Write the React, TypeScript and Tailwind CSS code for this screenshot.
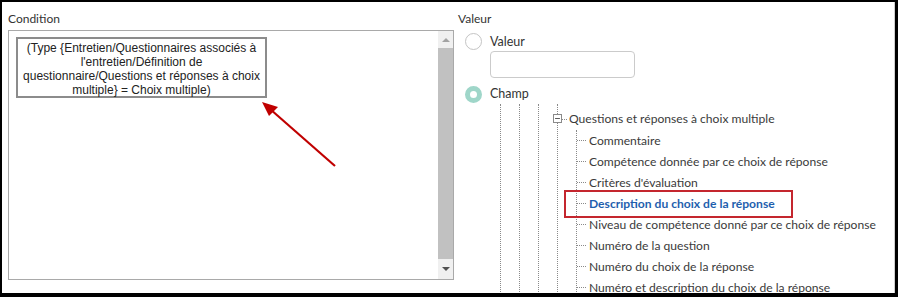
import { Minus } from 'lucide-react';

const children = [
  'Commentaire',
  'Compétence donnée par ce choix de réponse',
  "Critères d'évaluation",
  'Description du choix de la réponse',
  'Niveau de compétence donné par ce choix de réponse',
  'Numéro de la question',
  'Numéro du choix de la réponse',
  'Numéro et description du choix de la réponse',
];

export default function App() {
  return (
    <div className="relative w-[898px] h-[297px] bg-black pl-[2px] pt-[2px] pr-[3px] pb-[4px]">
      <div className="h-full bg-white border-r border-[#cfcfcf] flex overflow-hidden text-[#333] font-['Lato','Open_Sans',sans-serif]">
        {/* Condition */}
        <div className="w-[452px] shrink-0 pl-[6px] pt-[9px] flex flex-col">
          <div className="text-[12px] leading-[16px] h-[19px]">Condition</div>
          <div className="flex h-[250px] border border-[#a9a9a9]">
            <div className="flex-1 pl-[7px] pt-[6px]">
              <div className="w-[251px] h-[61px] border-2 border-[#8c8c8c] pt-[2px] text-center text-[12px] leading-[14px] text-[#222] font-['Liberation_Sans',Arial,sans-serif]">
                (Type {'{'}Entretien/Questionnaires associés à l'entretien/Définition de questionnaire/Questions et réponses à choix multiple{'}'} = Choix multiple)
              </div>
            </div>
            <div className="w-[15px] flex flex-col bg-[#f0f0f0]">
              <div className="h-[17px] flex items-center justify-center">
                <div className="w-0 h-0 border-l-[4px] border-r-[4px] border-b-[4px] border-l-transparent border-r-transparent border-b-[#a3a3a3]" />
              </div>
              <div className="flex-1 bg-[#c1c1c1]" />
              <div className="h-[20px] flex items-center justify-center">
                <div className="w-0 h-0 border-l-[4px] border-r-[4px] border-t-[4px] border-l-transparent border-r-transparent border-t-[#505050]" />
              </div>
            </div>
          </div>
        </div>

        {/* Valeur */}
        <div className="flex-1 ml-[4px] pt-[9px] flex flex-col">
          <div className="text-[12px] leading-[16px] h-[19px]">Valeur</div>
          <div className="flex">
            <div className="w-[32px] shrink-0 pl-[7px]">
              <div className="mt-[6px] w-[17px] h-[17px] rounded-full border border-[#c4c4c4] bg-white" />
              <div className="mt-[36px] w-[17px] h-[17px] rounded-full border-[5px] border-[#9fd6c9] bg-white" />
            </div>
            <div className="flex-1">
              <div className="mt-[7px] text-[12.5px] leading-[16px]">Valeur</div>
              <div className="mt-[1px] w-[145px] h-[27px] rounded-[4px] border border-[#cbcbcb]" />
              <div className="mt-[8px] text-[12.5px] leading-[16px]">Champ</div>

              <div className="flex ml-[10px] mt-[2px] text-[12.1px] leading-[16px] text-[#3a3a3a]">
                <div className="w-[19px] h-[200px] border-l border-dotted border-[#8a8a8a]" />
                <div className="w-[19px] border-l border-dotted border-[#8a8a8a]" />
                <div className="w-[19px] border-l border-dotted border-[#8a8a8a]" />
                <div className="flex-1 border-l border-dotted border-[#8a8a8a]">
                  <div className="relative mt-[5px] h-[20px] flex items-center pl-[11px]">
                    <div className="absolute left-[-5px] top-[5px] w-[9px] h-[9px] border border-[#8a8a8a] bg-white flex items-center justify-center">
                      <Minus className="w-[9px] h-[9px] text-[#444]" strokeWidth={3} />
                    </div>
                    <div className="absolute left-[4px] top-[10px] w-[5px] border-t border-dotted border-[#8a8a8a]" />
                    <span className="whitespace-nowrap">Questions et réponses à choix multiple</span>
                  </div>
                  <div className="ml-[18px] mt-[1px] border-l border-dotted border-[#8a8a8a]">
                    {children.map((c) => {
                      const hit = c === 'Description du choix de la réponse';
                      return (
                        <div key={c} className="relative h-[21px] flex items-center">
                          <div className="w-[9px] border-t border-dotted border-[#8a8a8a]" />
                          <span
                            className={`ml-[3px] whitespace-nowrap ${
                              hit ? 'font-bold text-[#1f5fae]' : ''
                            }`}
                          >
                            {c}
                          </span>
                          {hit && (
                            <div className="absolute left-[-13px] top-[-3px] w-[229px] h-[28px] border-2 border-[#c4262e]" />
                          )}
                        </div>
                      );
                    })}
                  </div>
                </div>
              </div>
            </div>
          </div>
        </div>
      </div>

      {/* annotation arrow */}
      <svg className="absolute left-0 top-0 pointer-events-none" width="898" height="297">
        <line x1="335" y1="166" x2="270" y2="109" stroke="#c00000" strokeWidth="2.2" />
        <polygon points="262,102 278,107 269,116" fill="#c00000" />
      </svg>
    </div>
  );
}
